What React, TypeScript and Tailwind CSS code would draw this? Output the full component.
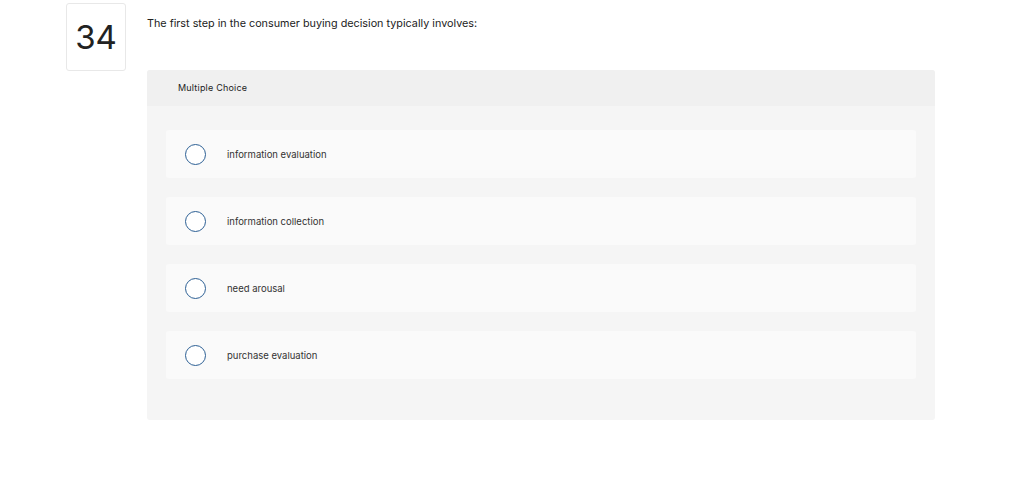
const options = [
  "information evaluation",
  "information collection",
  "need arousal",
  "purchase evaluation",
];

export default function App() {
  return (
    <div
      className="flex h-[485px] w-[1024px] bg-white text-[#333]"
      style={{ fontFamily: "Inter, 'Noto Sans', sans-serif" }}
    >
      <div className="ml-[66px] mt-[3px] flex h-[68px] w-[60px] shrink-0 items-center justify-center rounded-[3px] border border-[#e8e8e8]">
        <span className="text-[33px] leading-none text-[#222]">34</span>
      </div>

      <div className="ml-[21px] w-[788px]">
        <p className="mt-[17px] text-[10.8px] leading-[14px] text-[#222]">
          The first step in the consumer buying decision typically involves:
        </p>

        <div className="mt-[39px] rounded-[3px] bg-[#f5f5f5] pb-[41px]">
          <div className="flex h-[36px] items-center rounded-t-[3px] bg-[#f0f0f0] pl-[31px]">
            <span className="text-[9px] tracking-[0.2px] text-[#222]">Multiple Choice</span>
          </div>

          <div className="mt-[24px] flex flex-col gap-[19px] px-[19px]">
            {options.map((opt) => (
              <label
                key={opt}
                className="flex h-[48px] items-center rounded-[3px] bg-[#fafafa] pl-[19px]"
              >
                <span className="h-[21px] w-[21px] shrink-0 rounded-full border border-[#2c5f94] bg-white" />
                <span className="ml-[21px] pt-[2px] text-[9.5px] text-[#333]">{opt}</span>
              </label>
            ))}
          </div>
        </div>
      </div>
    </div>
  );
}
